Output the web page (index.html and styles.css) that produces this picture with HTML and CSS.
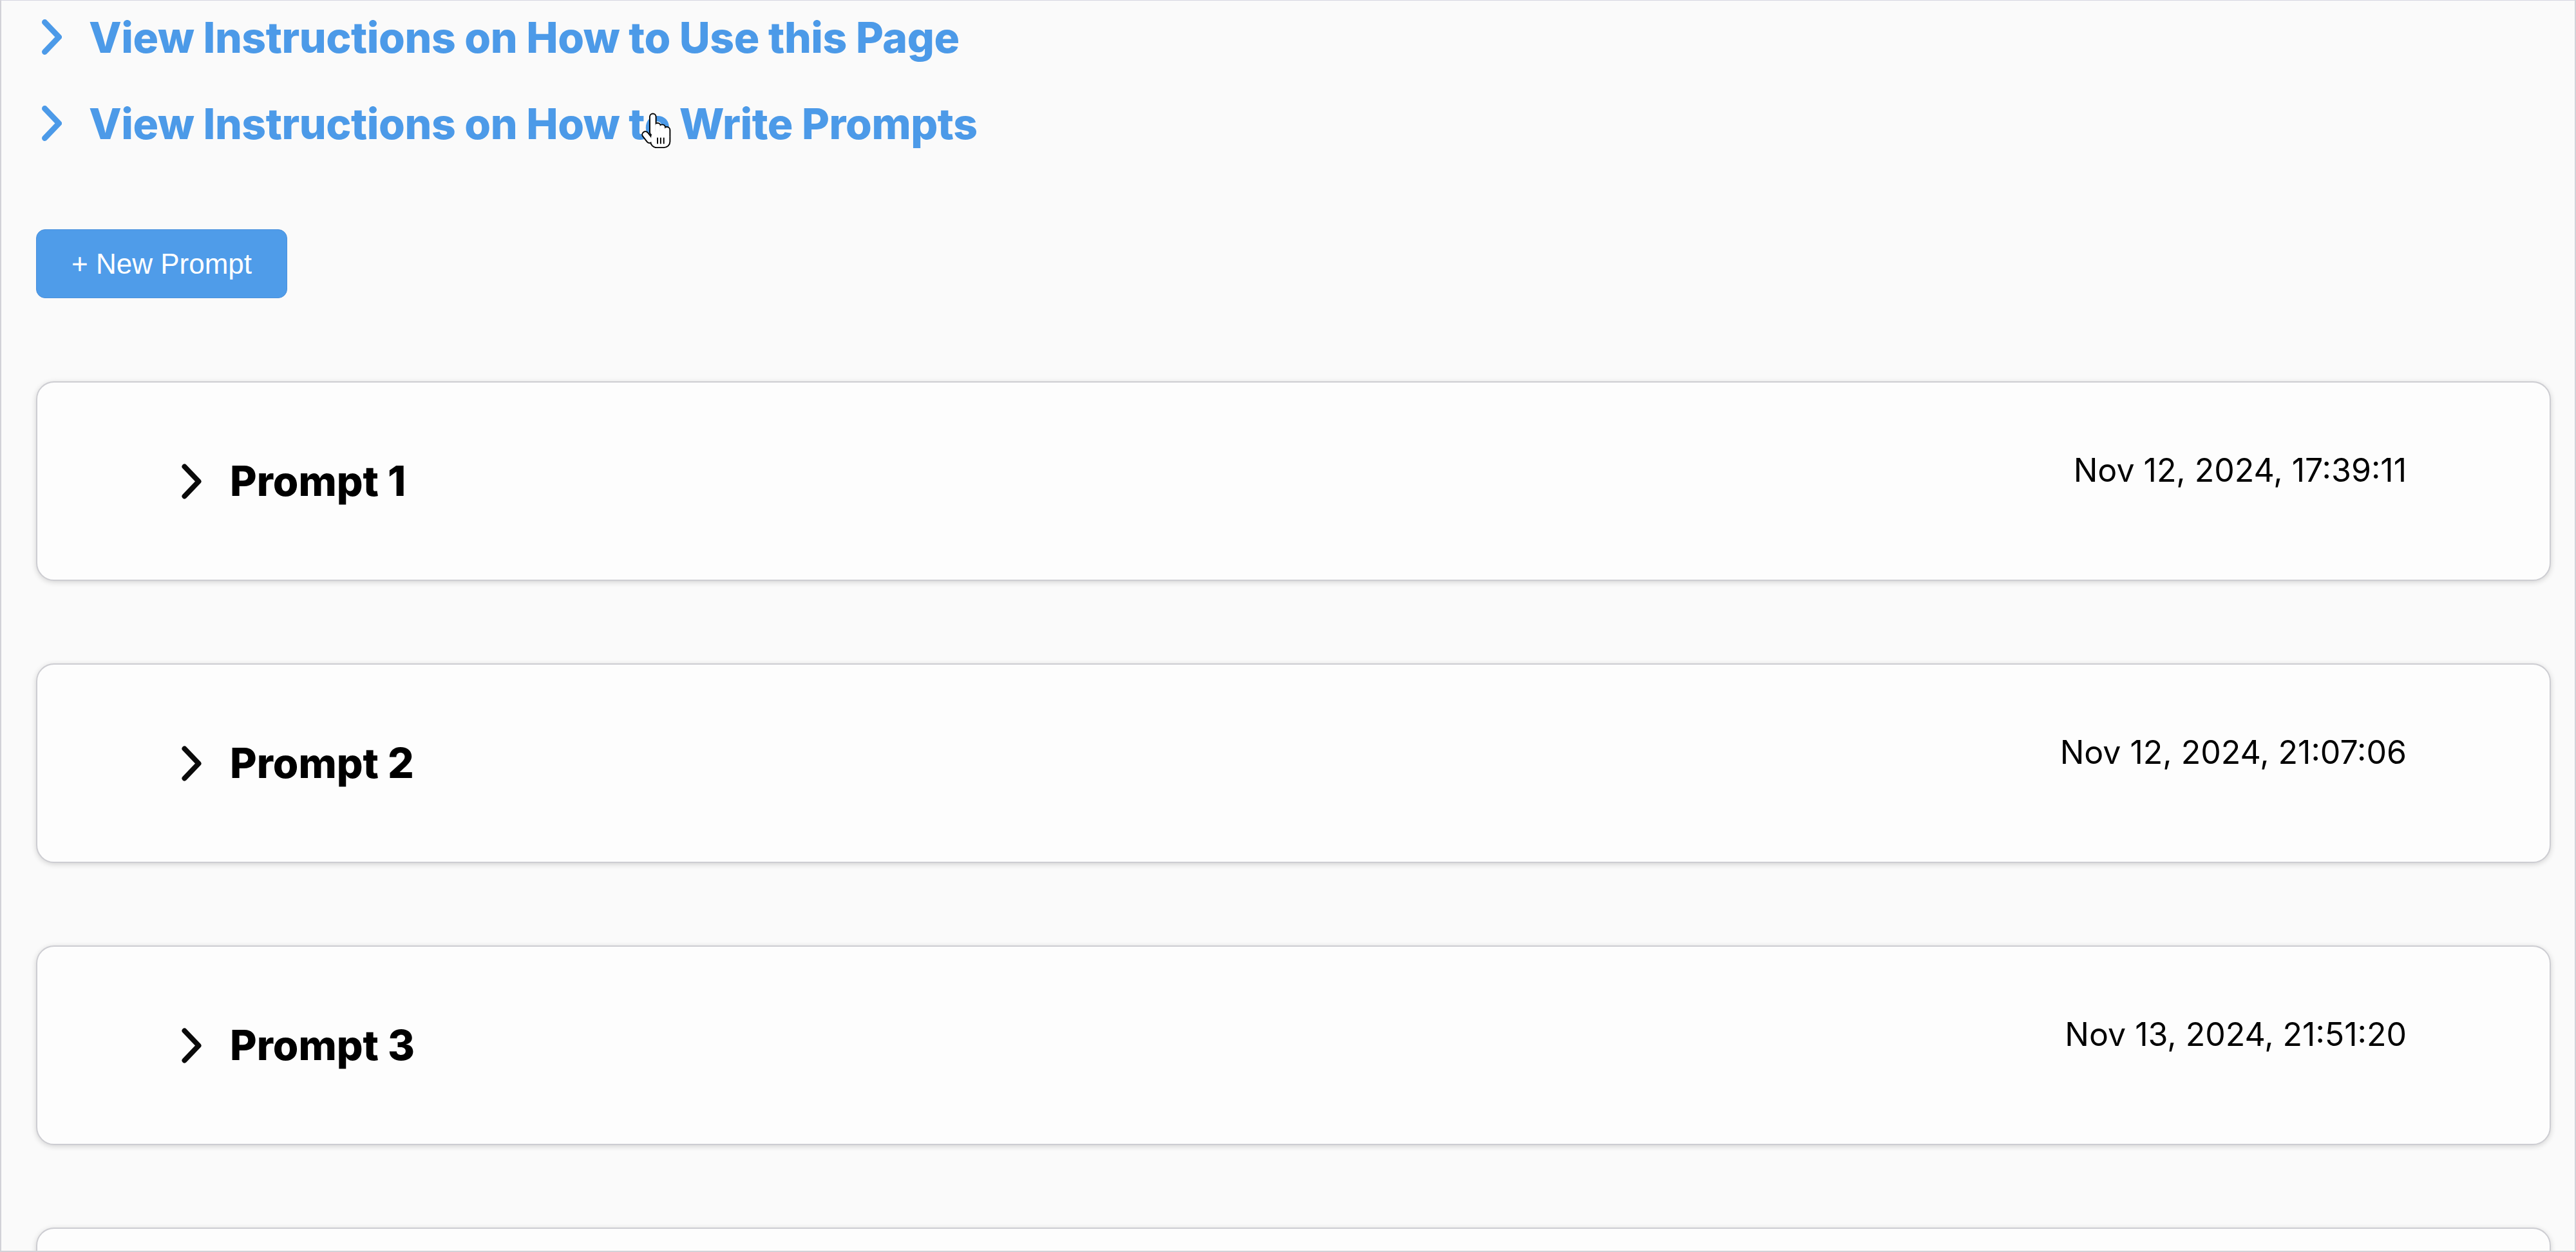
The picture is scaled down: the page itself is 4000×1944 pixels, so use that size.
FILE: index.html
```html
<!DOCTYPE html>
<html lang="en">
<head>
<meta charset="utf-8">
<title>Prompts</title>
<link rel="stylesheet" href="styles.css">
</head>
<body>
<div class="frame">
  <div class="links">
    <div class="link-row">
      <svg class="chev" viewBox="0 0 31 55"><polyline points="4.5,4.5 26.5,27.5 4.5,50.5"/></svg>
      <span class="link-text">View Instructions on How to Use this Page</span>
    </div>
    <div class="link-row">
      <svg class="chev" viewBox="0 0 31 55"><polyline points="4.5,4.5 26.5,27.5 4.5,50.5"/></svg>
      <span class="link-text">View Instructions on How to Write Prompts</span>
      <svg class="hand" viewBox="0 0 20 24">
        <g class="hand-outline">
          <rect x="5" y="1" width="3.2" height="13" rx="1.6"/>
          <rect x="8" y="7" width="3.2" height="8" rx="1.6"/>
          <rect x="11" y="8" width="3.2" height="8" rx="1.6"/>
          <rect x="14" y="9.5" width="3.2" height="7" rx="1.6"/>
          <rect x="5.5" y="12" width="11.7" height="10" rx="3.5"/>
          <rect x="1.5" y="12" width="3.2" height="7.5" rx="1.6" transform="rotate(-38 3.1 15.75)"/>
        </g>
        <g class="hand-fill">
          <rect x="5" y="1" width="3.2" height="13" rx="1.6"/>
          <rect x="8" y="7" width="3.2" height="8" rx="1.6"/>
          <rect x="11" y="8" width="3.2" height="8" rx="1.6"/>
          <rect x="14" y="9.5" width="3.2" height="7" rx="1.6"/>
          <rect x="5.5" y="12" width="11.7" height="10" rx="3.5"/>
          <rect x="1.5" y="12" width="3.2" height="7.5" rx="1.6" transform="rotate(-38 3.1 15.75)"/>
        </g>
        <g class="hand-lines">
          <line x1="9.6" y1="16" x2="9.6" y2="20"/>
          <line x1="11.6" y1="16" x2="11.6" y2="20"/>
          <line x1="13.6" y1="16" x2="13.6" y2="20"/>
        </g>
      </svg>
    </div>
  </div>

  <button class="new-btn">+ New Prompt</button>

  <div class="cards">
    <div class="card">
      <div class="title">
        <svg class="chev dark" viewBox="0 0 31 55"><polyline points="4.5,4.5 26.5,27.5 4.5,50.5"/></svg>
        <span class="title-text">Prompt 1</span>
      </div>
      <span class="date">Nov 12, 2024, 17:39:11</span>
    </div>
    <div class="card">
      <div class="title">
        <svg class="chev dark" viewBox="0 0 31 55"><polyline points="4.5,4.5 26.5,27.5 4.5,50.5"/></svg>
        <span class="title-text">Prompt 2</span>
      </div>
      <span class="date">Nov 12, 2024, 21:07:06</span>
    </div>
    <div class="card">
      <div class="title">
        <svg class="chev dark" viewBox="0 0 31 55"><polyline points="4.5,4.5 26.5,27.5 4.5,50.5"/></svg>
        <span class="title-text">Prompt 3</span>
      </div>
      <span class="date">Nov 13, 2024, 21:51:20</span>
    </div>
    <div class="card card-partial"></div>
  </div>
</div>
</body>
</html>
```
FILE: styles.css
```css
html, body {
  margin: 0;
  padding: 0;
  background: #fafafa;
}

.frame {
  height: 1944px;
  box-sizing: border-box;
  border: 2px solid #d2d2d8;
  border-top: 1px solid #d6d6e0;
  overflow: hidden;
  padding: 0 37px 0 54px;
  background: #fafafa;
}

.links {
  display: flex;
  flex-direction: column;
  gap: 21px;
}

.link-row {
  position: relative;
  display: flex;
  align-items: center;
  gap: 42px;
  height: 113px;
  padding-left: 9px;
  color: #4c9ae8;
}

.chev {
  width: 31px;
  height: 55px;
  flex: none;
}

.chev polyline {
  fill: none;
  stroke: #4c9ae8;
  stroke-width: 9;
  stroke-linecap: round;
  stroke-linejoin: round;
}

.chev.dark polyline {
  stroke: #0a0a0a;
  stroke-width: 8;
}

.link-text {
  font-family: Inter, "Open Sans", sans-serif;
  font-weight: 800;
  font-size: 66px;
  letter-spacing: -0.45px;
  line-height: 1;
  white-space: nowrap;
}

.hand {
  position: absolute;
  left: 940px;
  top: 40px;
  width: 52px;
  height: 58px;
}

.hand-outline rect {
  fill: #000;
  stroke: #000;
  stroke-width: 1.6;
}

.hand-fill rect {
  fill: #fff;
}

.hand-lines line {
  stroke: #000;
  stroke-width: 0.8;
}

.new-btn {
  display: block;
  margin-top: 108px;
  width: 390px;
  height: 107px;
  border-radius: 14px;
  background: #4f9ce9;
  border: 1px solid #4a90dc;
  color: #ffffff;
  font-family: "Liberation Sans", Arial, sans-serif;
  font-size: 44px;
  padding: 0;
}

.cards {
  margin-top: 129px;
  display: flex;
  flex-direction: column;
  gap: 128px;
}

.card {
  flex: none;
  height: 310px;
  box-sizing: border-box;
  border: 2px solid #cdcdd2;
  border-radius: 28px;
  box-shadow: 0 2px 8px rgba(0, 0, 0, 0.16);
  background: #fdfdfd;
  padding: 0 222px 0 224px;
  display: flex;
  align-items: center;
  justify-content: space-between;
}

.title {
  display: flex;
  align-items: center;
  gap: 44px;
}

.title-text {
  font-family: Inter, "Open Sans", sans-serif;
  font-weight: 800;
  font-size: 64px;
  line-height: 1;
  color: #000;
}

.date {
  font-family: Inter, "Open Sans", sans-serif;
  font-weight: 400;
  font-size: 50px;
  line-height: 1;
  color: #000;
  margin-bottom: 34px;
}
```
